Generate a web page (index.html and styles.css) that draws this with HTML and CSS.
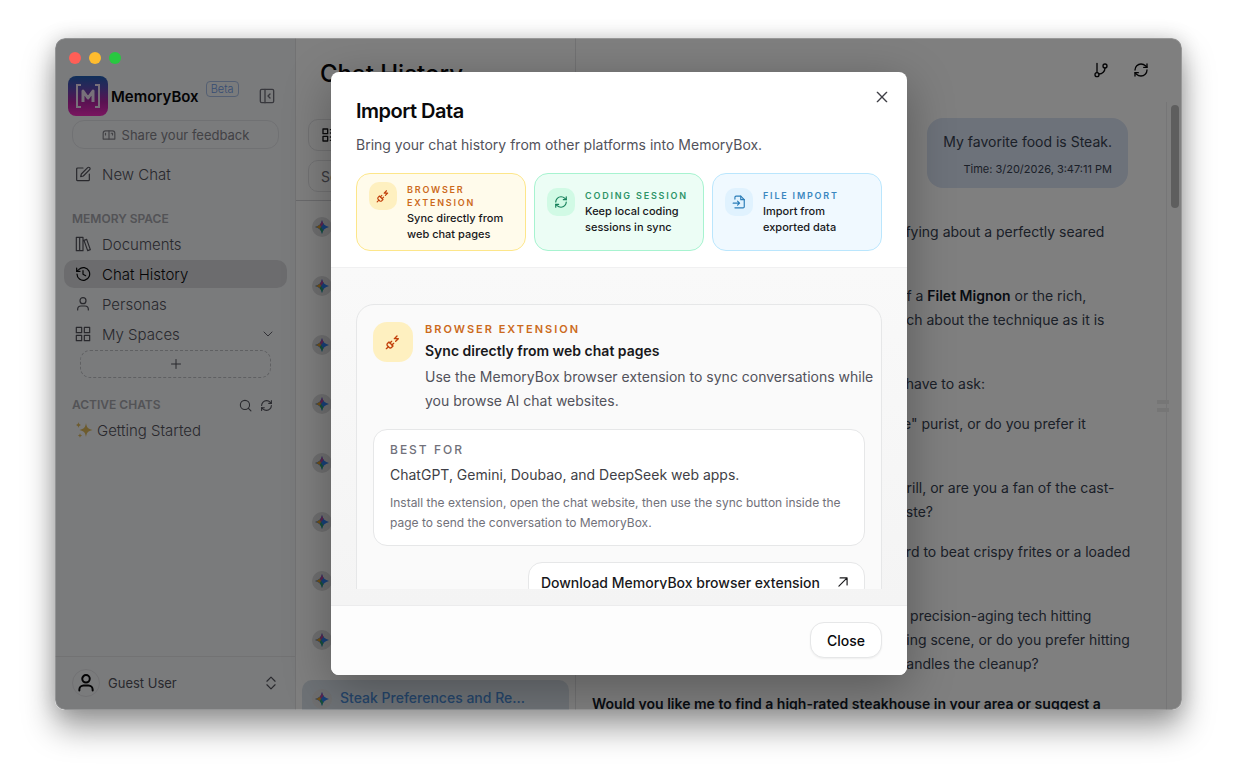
FILE: index.html
```html
<!DOCTYPE html>
<html lang="en">
<head>
    <meta charset="UTF-8">
    <meta name="viewport" content="width=device-width, initial-scale=1.0">
    <title>MemoryBox</title>
    <link rel="stylesheet" href="styles.css">
</head>
<body>
    <!-- shared icons -->
    <svg class="sprite" aria-hidden="true">
        <defs>
            <symbol id="i-refresh" viewBox="0 0 24 24"><path d="M3 12a9 9 0 0 1 9-9 9.75 9.75 0 0 1 6.74 2.74L21 8"/><path d="M21 3v5h-5"/><path d="M21 12a9 9 0 0 1-9 9 9.75 9.75 0 0 1-6.74-2.74L3 16"/><path d="M8 16H3v5"/></symbol>
            <symbol id="i-plug" viewBox="0 0 24 24"><path d="M6.3 20.3a2.4 2.4 0 0 0 3.4 0L12 18l-6-6-2.3 2.3a2.4 2.4 0 0 0 0 3.4Z"/><path d="m2 22 3-3"/><path d="M7.5 13.5 10 11"/><path d="M10.5 16.5 13 14"/><path d="m18 3-4 4h6l-4 4"/></symbol>
            <symbol id="i-user" viewBox="0 0 24 24"><circle cx="12" cy="7" r="4.500"/><path d="M4 21v-1a5 5 0 0 1 5-5h6a5 5 0 0 1 5 5v1"/></symbol>
            <symbol id="i-gemini" viewBox="0 0 16 16">
                <path d="M8 0C9 4.500 11.500 7 16 8 11.500 9 9 11.500 8 16 7 11.500 4.500 9 0 8 4.500 7 7 4.500 8 0z" fill="#2f80f0"/>
                <path d="M8 0c.4 2 1 3.300 1.800 4.400L7 8 5.500 5.500C7 4 7.600 2 8 0z" fill="#b8489c"/>
                <path d="M0 8c2-.4 4-1 5.500-2.500L7 8l-1.500 2.500C4 9 2 8.400 0 8z" fill="#e0a030"/>
                <path d="M8 16c-.4-2-1-4-2.500-5.500L7 8l2.600 4C8.900 13.200 8.300 14.400 8 16z" fill="#2fa070"/>
            </symbol>
        </defs>
    </svg>

    <div class="window">
        <aside class="sidebar">
            <div class="brand">
                <svg class="logo" viewBox="0 0 40 40">
                    <defs>
                        <linearGradient id="logoBg" x1="0" y1="0" x2="0" y2="1">
                            <stop offset="0" stop-color="#2060b4"/>
                            <stop offset=".3" stop-color="#5a4cb4"/>
                            <stop offset=".65" stop-color="#b424a4"/>
                            <stop offset="1" stop-color="#f42cc0"/>
                        </linearGradient>
                    </defs>
                    <rect width="40" height="40" rx="8" fill="url(#logoBg)"/>
                    <path d="M13 9H9v22h4M27 9h4v22h-4" fill="none" stroke="#f0e0f4" stroke-width="2"/>
                    <path d="M15 26V15l5 7 5-7v11" fill="none" stroke="#f0e0f4" stroke-width="3" stroke-linejoin="round"/>
                </svg>
                <span class="brand-name">MemoryBox</span>
                <span class="beta">Beta</span>
                <button class="icon-btn collapse" aria-label="Collapse sidebar">
                    <svg class="icon" viewBox="0 0 24 24"><rect x="2" y="2" width="20" height="20" rx="2"/><path d="M9 2v20M16.500 9l-3 3 3 3"/></svg>
                </button>
            </div>
            <button class="feedback">
                <svg class="icon" viewBox="0 0 24 24"><path d="M22 19V9a4 4 0 0 0-4-4H6a4 4 0 0 0-4 4v10z"/><path d="M12 5v14M6 9v3M16 9h2v3"/></svg>
                Share your feedback
            </button>
            <nav class="nav">
                <a class="nav-item new-chat" href="#">
                    <svg class="icon" viewBox="0 0 24 24"><path d="M12 3H4a1.500 1.500 0 0 0-1.500 1.500v16A1.500 1.500 0 0 0 4 22h16a1.500 1.500 0 0 0 1.500-1.500V12"/><path d="M19 2.500a2.100 2.100 0 0 1 3 3L12.500 15l-4 1 1-4z"/></svg>
                    New Chat
                </a>
                <h2 class="nav-title">MEMORY SPACE</h2>
                <a class="nav-item" href="#">
                    <svg class="icon" viewBox="0 0 24 24"><path d="M2 2h5v20H2zM7 2h5v20H7zM13.500 6.500l4-1.500L23 20.500l-4 1.500z"/></svg>
                    Documents
                </a>
                <a class="nav-item active" href="#">
                    <svg class="icon" viewBox="0 0 24 24"><path d="M3 12a9.500 9.500 0 1 0 3-7L2.500 8"/><path d="M2.500 3v5h5M12 7v5.500l4 2"/></svg>
                    Chat History
                </a>
                <a class="nav-item" href="#">
                    <svg class="icon"><use href="#i-user"/></svg>
                    Personas
                </a>
                <a class="nav-item" href="#">
                    <svg class="icon" viewBox="0 0 24 24"><rect x="2" y="2" width="8" height="8"/><rect x="14" y="2" width="8" height="8"/><rect x="2" y="14" width="8" height="8"/><rect x="14" y="14" width="8" height="8"/></svg>
                    My Spaces
                    <svg class="icon chevron" viewBox="0 0 24 24"><path d="M4 8l8 8 8-8"/></svg>
                </a>
                <button class="add-space" aria-label="Add space">
                    <svg class="icon" viewBox="0 0 24 24"><path d="M3 12h18M12 3v18"/></svg>
                </button>
                <div class="nav-head">
                    <h2 class="nav-title">ACTIVE CHATS</h2>
                    <button class="icon-btn" aria-label="Search chats"><svg class="icon" viewBox="0 0 24 24"><circle cx="11" cy="11" r="8.500"/><path d="M22 22l-5-5"/></svg></button>
                    <button class="icon-btn" aria-label="Refresh chats"><svg class="icon"><use href="#i-refresh"/></svg></button>
                </div>
                <a class="chat-link" href="#">
                    <svg class="sparkles" viewBox="0 0 18 18"><path d="M11 2c.7 4.500 2 6 6.500 7-4.500 1-5.800 2.500-6.500 7-.7-4.500-2-6-6.500-7C9 8 10.300 6.500 11 2zM3.500 1c.3 2 1 2.500 2.500 3-1.500.5-2.200 1-2.500 3C3.200 5 2.500 4.500 1 4c1.500-.5 2.200-1 2.500-3zM5 12c.2 1.600.8 2.100 2.200 2.500C5.800 15 5.200 15.400 5 17c-.2-1.600-.8-2-2.200-2.500C4.200 14.100 4.800 13.600 5 12z"/></svg>
                    Getting Started
                </a>
            </nav>
            <div class="account">
                <span class="avatar"><svg class="icon"><use href="#i-user"/></svg></span>
                <span>Guest User</span>
                <svg class="icon updown" viewBox="0 0 24 24"><path d="M5 9l7-7 7 7M5 15l7 7 7-7"/></svg>
            </div>
        </aside>

        <section class="history">
            <header class="history-head">
                <h1>Chat History</h1>
                <button class="filter" aria-label="View options">
                    <svg class="icon" viewBox="0 0 24 24"><rect x="3" y="3" width="7" height="7"/><rect x="3" y="14" width="7" height="7"/><path d="M14 4h8M14 9h8M14 15h8M14 20h8"/></svg>
                </button>
                <input class="search" type="text" placeholder="Search" aria-label="Search">
            </header>
            <ul class="chat-list">
                <li><span class="bot"><svg><use href="#i-gemini"/></svg></span></li>
                <li><span class="bot"><svg><use href="#i-gemini"/></svg></span></li>
                <li><span class="bot"><svg><use href="#i-gemini"/></svg></span></li>
                <li><span class="bot"><svg><use href="#i-gemini"/></svg></span></li>
                <li><span class="bot"><svg><use href="#i-gemini"/></svg></span></li>
                <li><span class="bot"><svg><use href="#i-gemini"/></svg></span></li>
                <li><span class="bot"><svg><use href="#i-gemini"/></svg></span></li>
                <li><span class="bot"><svg><use href="#i-gemini"/></svg></span></li>
                <li class="selected"><span class="bot"><svg><use href="#i-gemini"/></svg></span><span class="chat-name">Steak Preferences and Re...</span></li>
            </ul>
        </section>

        <main class="conversation">
            <div class="toolbar">
                <button class="icon-btn" aria-label="Branches"><svg class="icon" viewBox="0 0 24 24"><path d="M6 2v14M18 9a9 9 0 0 1-9 9"/><circle cx="6" cy="19" r="3"/><circle cx="18" cy="6" r="3"/></svg></button>
                <button class="icon-btn" aria-label="Refresh"><svg class="icon"><use href="#i-refresh"/></svg></button>
            </div>
            <div class="thread">
                <div class="messages">
                    <div class="bubble">
                        <p>My favorite food is Steak.</p>
                        <time>Time: 3/20/2026, 3:47:11 PM</time>
                    </div>
                    <div class="reply">
                        <p>sfying about a perfectly seared</p>
                        <p class="gap-l">of a <b>Filet Mignon</b> or the rich,<br>uch about the technique as it is</p>
                        <p class="gap-l">I have to ask:</p>
                        <p>re" purist, or do you prefer it</p>
                        <p class="gap-l">grill, or are you a fan of the cast-<br>aste?</p>
                        <p>ard to beat crispy frites or a loaded</p>
                        <p class="gap-l">e precision-aging tech hitting<br>ning scene, or do you prefer hitting<br>handles the cleanup?</p>
                    </div>
                    <p><b>Would you like me to find a high-rated steakhouse in your area or suggest a</b></p>
                </div>
                <div class="rail"><span class="thumb"></span><span class="grip"></span></div>
            </div>
        </main>

        <div class="overlay">
            <div class="modal" role="dialog" aria-labelledby="importTitle">
                <header class="modal-head">
                    <h2 id="importTitle">Import Data</h2>
                    <button class="icon-btn modal-x" aria-label="Close dialog"><svg class="icon" viewBox="0 0 24 24"><path d="M5 5l14 14M19 5L5 19"/></svg></button>
                    <p>Bring your chat history from other platforms into MemoryBox.</p>
                    <div class="sources">
                        <button class="source amber">
                            <span class="badge"><svg class="icon"><use href="#i-plug"/></svg></span>
                            <span><span class="eyebrow">BROWSER EXTENSION</span><span class="source-text">Sync directly from web chat pages</span></span>
                        </button>
                        <button class="source green">
                            <span class="badge"><svg class="icon"><use href="#i-refresh"/></svg></span>
                            <span><span class="eyebrow">CODING SESSION</span><span class="source-text">Keep local coding sessions in sync</span></span>
                        </button>
                        <button class="source blue">
                            <span class="badge"><svg class="icon" viewBox="0 0 24 24"><path d="M5 7V4a2 2 0 0 1 2-2h8l6 6v12a2 2 0 0 1-2 2H5"/><path d="M15 2v6h6M2 14h11M9.500 10.500L13 14l-3.500 3.500"/></svg></span>
                            <span><span class="eyebrow">FILE IMPORT</span><span class="source-text">Import from exported data</span></span>
                        </button>
                    </div>
                </header>
                <div class="modal-body">
                    <div class="scroller">
                        <section class="card">
                            <div class="card-head amber">
                                <span class="badge large"><svg class="icon"><use href="#i-plug"/></svg></span>
                                <div>
                                    <div class="eyebrow">BROWSER EXTENSION</div>
                                    <h3>Sync directly from web chat pages</h3>
                                    <p>Use the MemoryBox browser extension to sync conversations while you browse AI chat websites.</p>
                                </div>
                            </div>
                            <div class="best-for">
                                <h4>BEST FOR</h4>
                                <p class="apps">ChatGPT, Gemini, Doubao, and DeepSeek web apps.</p>
                                <p class="hint">Install the extension, open the chat website, then use the sync button inside the page to send the conversation to MemoryBox.</p>
                            </div>
                            <a class="download" href="#">
                                Download MemoryBox browser extension
                                <svg class="icon" viewBox="0 0 24 24"><path d="M5 19L19 5M7 5h12v12"/></svg>
                            </a>
                        </section>
                    </div>
                </div>
                <footer class="modal-foot">
                    <button class="close-btn">Close</button>
                </footer>
            </div>
        </div>

        <div class="lights"><span></span><span></span><span></span></div>
    </div>
</body>
</html>
```
FILE: styles.css
```css
* {
    box-sizing: border-box;
}
body {
    margin: 0;
    height: 100vh;
    padding: 38px 55px 73px;
    background: #fff;
    font-family: Inter, "Liberation Sans", sans-serif;
    font-size: 14px;
    color: #18181b;
}
h1, h2, h3, h4, p, ul {
    margin: 0;
    padding: 0;
}
button, input {
    font: inherit;
    color: inherit;
}
button {
    cursor: pointer;
}
a {
    color: inherit;
    text-decoration: none;
}
.sprite {
    display: none;
}
.icon {
    flex: none;
    width: 16px;
    height: 16px;
    fill: none;
    stroke: currentColor;
    stroke-width: 2;
    stroke-linecap: round;
    stroke-linejoin: round;
}
.icon-btn {
    display: flex;
    border: 0;
    padding: 0;
    background: none;
}
.window {
    position: relative;
    display: flex;
    height: 100%;
    border-radius: 10px;
    overflow: hidden;
    background: #fff;
    box-shadow: 0 18px 32px rgba(0, 0, 0, .38), 0 0 20px rgba(0, 0, 0, .16);
}
.lights {
    position: absolute;
    top: 14px;
    left: 14px;
    display: flex;
    gap: 8px;
}
.lights span {
    width: 12px;
    height: 12px;
    border-radius: 50%;
    background: #ff5f57;
}
.lights span:nth-child(2) {
    background: #febc2e;
}
.lights span:nth-child(3) {
    background: #28c840;
}

/* sidebar */
.sidebar {
    flex: none;
    display: flex;
    flex-direction: column;
    width: 241px;
    padding-top: 38px;
    background: #f4f6f9;
    border-right: 1px solid #e4e4e7;
    color: #52525b;
    font-size: 15px;
    font-weight: 300;
}
.brand {
    display: flex;
    align-items: center;
    height: 40px;
    padding: 0 20px 0 13px;
}
.logo {
    width: 40px;
    height: 40px;
}
.brand-name {
    margin-left: 3px;
    font-weight: 600;
    color: #09090b;
}
.beta {
    align-self: flex-start;
    margin: 5px 0 0 7px;
    padding: 0 4px;
    border: 1px solid #a9bfe6;
    border-radius: 4px;
    font-size: 11px;
    line-height: 14px;
    color: #6f9ae6;
}
.collapse {
    margin-left: auto;
    color: #71717a;
}
.feedback {
    display: flex;
    align-items: center;
    justify-content: center;
    gap: 6px;
    height: 29px;
    margin: 4px 16px 0 17px;
    border: 1px solid #e1e2e6;
    border-radius: 12px;
    background: none;
    font-size: 13px;
    font-weight: 400;
    color: #84848b;
}
.feedback .icon {
    width: 14px;
    height: 14px;
}
.nav {
    display: flex;
    flex-direction: column;
    gap: 2px;
    flex: 1;
    padding: 11px 8px 0 9px;
}
.nav-item {
    display: flex;
    align-items: center;
    gap: 11px;
    height: 28px;
    padding: 0 11px;
    border-radius: 10px;
}
.nav-item .icon, .avatar .icon {
    stroke-width: 1.8;
}
.nav-item .chevron {
    width: 12px;
    height: 12px;
    margin-left: auto;
    margin-right: 2px;
}
.nav-item.active {
    background: #d8d9dc;
    color: #09090b;
}
.new-chat {
    margin-bottom: 20px;
}
.nav-title {
    padding: 0 8px;
    font-size: 12px;
    font-weight: 600;
    line-height: 18px;
    color: #a6a6ad;
}
.add-space {
    display: flex;
    align-items: center;
    justify-content: center;
    height: 28px;
    margin: 0 16px;
    border: 1px dashed #bfc0c4;
    border-radius: 10px;
    background: none;
}
.add-space .icon {
    width: 12px;
    height: 12px;
}
.nav-head {
    display: flex;
    align-items: center;
    gap: 8px;
    margin-top: 16px;
    padding-right: 14px;
}
.nav-head .nav-title {
    margin-right: auto;
}
.nav-head .icon {
    width: 13px;
    height: 13px;
}
.chat-link {
    display: flex;
    align-items: center;
    gap: 4px;
    height: 28px;
    padding-left: 11px;
}
.sparkles {
    width: 18px;
    height: 18px;
    fill: #dcb85c;
}
.account {
    display: flex;
    align-items: center;
    gap: 8px;
    height: 54px;
    padding: 0 16px 2px 17px;
    border-top: 1px solid #e4e4e7;
    font-size: 13px;
    font-weight: 400;
}
.avatar {
    display: flex;
    align-items: center;
    justify-content: center;
    width: 28px;
    height: 28px;
    border: 1px solid #e4e4e7;
    border-radius: 50%;
    color: #09090b;
}
.avatar .icon {
    width: 20px;
    height: 20px;
    stroke-width: 2.4;
}
.updown {
    margin-left: auto;
    width: 16px;
    height: 14px;
}

/* chat history column */
.history {
    flex: none;
    width: 280px;
    border-right: 1px solid #e4e4e7;
    overflow: hidden;
}
.history-head {
    display: flex;
    flex-direction: column;
    height: 163px;
    padding: 20px 12px 0;
    border-bottom: 1px solid #d4d4d8;
}
.history-head h1 {
    padding-left: 12px;
    font-size: 24px;
    font-weight: 500;
    line-height: 32px;
    color: #09090b;
}
.filter {
    display: flex;
    align-items: center;
    width: 48px;
    height: 32px;
    margin-top: 29px;
    padding: 0 12px;
    border: 1px solid #e4e4e7;
    border-radius: 10px;
    background: #fff;
}
.search {
    width: 100%;
    height: 32px;
    margin-top: 9px;
    padding: 0 12px;
    border: 1px solid #e4e4e7;
    border-radius: 10px;
    background: #fff;
}
.search::placeholder {
    color: #71717a;
    opacity: 1;
}
.chat-list {
    list-style: none;
    padding: 7px 6px 0;
}
.chat-list li {
    display: flex;
    align-items: center;
    gap: 8px;
    height: 38px;
    margin-bottom: 21px;
    padding-left: 10px;
}
.chat-list .selected {
    height: 60px;
    padding-bottom: 22px;
    border-radius: 10px;
    background: #dde5ec;
    color: #4a8ad4;
    font-weight: 500;
}
.chat-name {
    padding-bottom: 4px;
}
.bot {
    display: flex;
    align-items: center;
    justify-content: center;
    width: 20px;
    height: 20px;
    border-radius: 50%;
    background: #dedee0;
}
.bot svg {
    width: 14px;
    height: 14px;
}

/* conversation */
.conversation {
    flex: 1;
    min-width: 0;
    display: flex;
    flex-direction: column;
    color: #374151;
}
.toolbar {
    display: flex;
    justify-content: flex-end;
    gap: 24px;
    height: 64px;
    padding: 24px 33px 0;
    color: #09090b;
}
.thread {
    display: flex;
    flex: 1;
    min-height: 0;
    overflow: hidden;
}
.messages {
    flex: 1;
    min-width: 0;
    padding: 16px 38px 0 16px;
    line-height: 24px;
    white-space: nowrap;
}
.bubble {
    width: fit-content;
    height: 70px;
    margin: 0 0 32px auto;
    padding: 12px 16px;
    border-radius: 16px;
    background: #dbe4f4;
    text-align: right;
}
.bubble time {
    display: block;
    padding-top: 5px;
    font-size: 11px;
    line-height: 20px;
}
.reply {
    padding-left: 306px;
}
.reply p {
    margin-bottom: 16px;
}
.reply .gap-l {
    margin-top: 40px;
}
.messages b {
    color: #111827;
    font-weight: 600;
}
.rail {
    position: relative;
    flex: none;
    width: 16px;
    border-left: 1px solid #ececee;
}
.thumb {
    display: block;
    width: 8px;
    height: 103px;
    margin: 3px auto 0;
    border-radius: 4px;
    background: #bdbdbd;
}
.grip {
    position: absolute;
    top: 298px;
    left: -10px;
    width: 12px;
    height: 12px;
    border: solid #ededed;
    border-width: 4px 0;
}

/* import dialog */
.overlay {
    position: absolute;
    inset: 0;
    display: flex;
    align-items: center;
    justify-content: center;
    padding: 34px 0 35px 1px;
    background: rgba(0, 0, 0, .5);
    border-radius: inherit;
    box-shadow: inset 0 0 0 1px rgba(255, 255, 255, .2);
}
.modal {
    display: flex;
    flex-direction: column;
    width: 576px;
    max-width: 90%;
    height: 100%;
    border-radius: 8px;
    overflow: hidden;
    background: #fff;
    box-shadow: 0 12px 48px rgba(0, 0, 0, .3);
}
.modal-head {
    position: relative;
    padding: 24px 25px 16px;
    border-bottom: 1px solid #f0f0f1;
}
.modal-head h2 {
    font-size: 20px;
    font-weight: 600;
    line-height: 30px;
    letter-spacing: -.5px;
    color: #09090b;
}
.modal-head p {
    margin: 7px 0 16px;
    line-height: 24px;
    color: #52525b;
}
.modal-x {
    position: absolute;
    top: 17px;
    right: 17px;
    color: #3f3f46;
}
.sources {
    display: grid;
    grid-template-columns: repeat(3, 1fr);
    gap: 8px;
}
.source {
    display: flex;
    align-items: center;
    gap: 10px;
    min-height: 78px;
    padding: 8px 12px;
    border: 1px solid;
    border-radius: 14px;
    text-align: left;
}
.source .badge {
    align-self: flex-start;
}
.source.green .badge, .source.blue .badge {
    align-self: center;
    margin-bottom: 20px;
}
.badge {
    flex: none;
    display: flex;
    align-items: center;
    justify-content: center;
    width: 28px;
    height: 28px;
    border-radius: 10px;
}
.badge .icon {
    width: 14px;
    height: 14px;
}
.badge.large {
    width: 40px;
    height: 40px;
    border-radius: 14px;
}
.badge.large .icon {
    width: 16px;
    height: 16px;
}
.eyebrow, .source-text {
    display: block;
}
.source .eyebrow {
    margin-bottom: 1px;
    font-size: 9px;
    font-weight: 600;
    line-height: 13px;
    letter-spacing: 1.8px;
}
.source-text {
    font-size: 11px;
    font-weight: 500;
    line-height: 16px;
    color: #18181b;
}
.source.amber {
    border-color: #fde68a;
    background: #fffbeb;
}
.source.green {
    border-color: #a7f3d0;
    background: #ecfdf5;
}
.source.blue {
    border-color: #bae6fd;
    background: #f0f9ff;
}
.amber .badge {
    background: #fef0c0;
    color: #c2410c;
}
.green .badge {
    background: #d1fae5;
    color: #15805a;
}
.blue .badge {
    background: #e0f2fe;
    color: #2a7db8;
}
.amber .eyebrow {
    color: #cc6a1c;
}
.green .eyebrow {
    color: #2e9468;
}
.blue .eyebrow {
    color: #3a87bf;
}
.modal-body {
    flex: 1;
    min-height: 0;
    padding: 16px 25px;
    background: linear-gradient(#f9f9f9, #f4f4f4);
}
.scroller {
    height: 100%;
    padding-top: 20px;
    overflow: hidden;
}
.card {
    display: flex;
    flex-direction: column;
    gap: 16px;
    padding: 17px 16px;
    border: 1px solid #e6e7e8;
    border-radius: 18px;
    background: #fafafa;
}
.card-head {
    display: flex;
    gap: 12px;
    align-items: flex-start;
    margin-right: -12px;
}
.card-head .eyebrow {
    font-size: 11px;
    font-weight: 600;
    line-height: 14px;
    letter-spacing: 2px;
}
.card-head h3 {
    margin: 5px 0 4px;
    font-size: 14px;
    font-weight: 600;
    line-height: 20px;
}
.card-head p {
    line-height: 24px;
    color: #52525b;
}
.best-for {
    padding: 12px 16px;
    border: 1px solid #e6e7e8;
    border-radius: 14px;
    background: #fff;
}
.best-for h4 {
    font-size: 12px;
    font-weight: 500;
    line-height: 16px;
    letter-spacing: 2px;
    color: #71717a;
}
.apps {
    margin: 5px 0 6px;
    line-height: 24px;
    color: #3f3f46;
}
.hint {
    font-size: 12px;
    line-height: 20px;
    color: #71717a;
}
.download {
    display: flex;
    align-items: center;
    gap: 16px;
    height: 40px;
    margin-left: auto;
    padding: 0 14px 0 12px;
    border: 1px solid #e6e7e8;
    border-radius: 14px;
    background: #fff;
    font-weight: 500;
}
.download .icon {
    width: 14px;
    height: 14px;
}
.modal-foot {
    display: flex;
    justify-content: flex-end;
    padding: 16px 25px 17px;
    border-top: 1px solid #ececed;
    background: #fdfdfd;
}
.close-btn {
    height: 36px;
    padding: 0 16px;
    border: 1px solid #e6e7e8;
    border-radius: 14px;
    background: #fff;
    box-shadow: 0 1px 2px rgba(0, 0, 0, .06);
    font-weight: 500;
    color: #09090b;
}
```
